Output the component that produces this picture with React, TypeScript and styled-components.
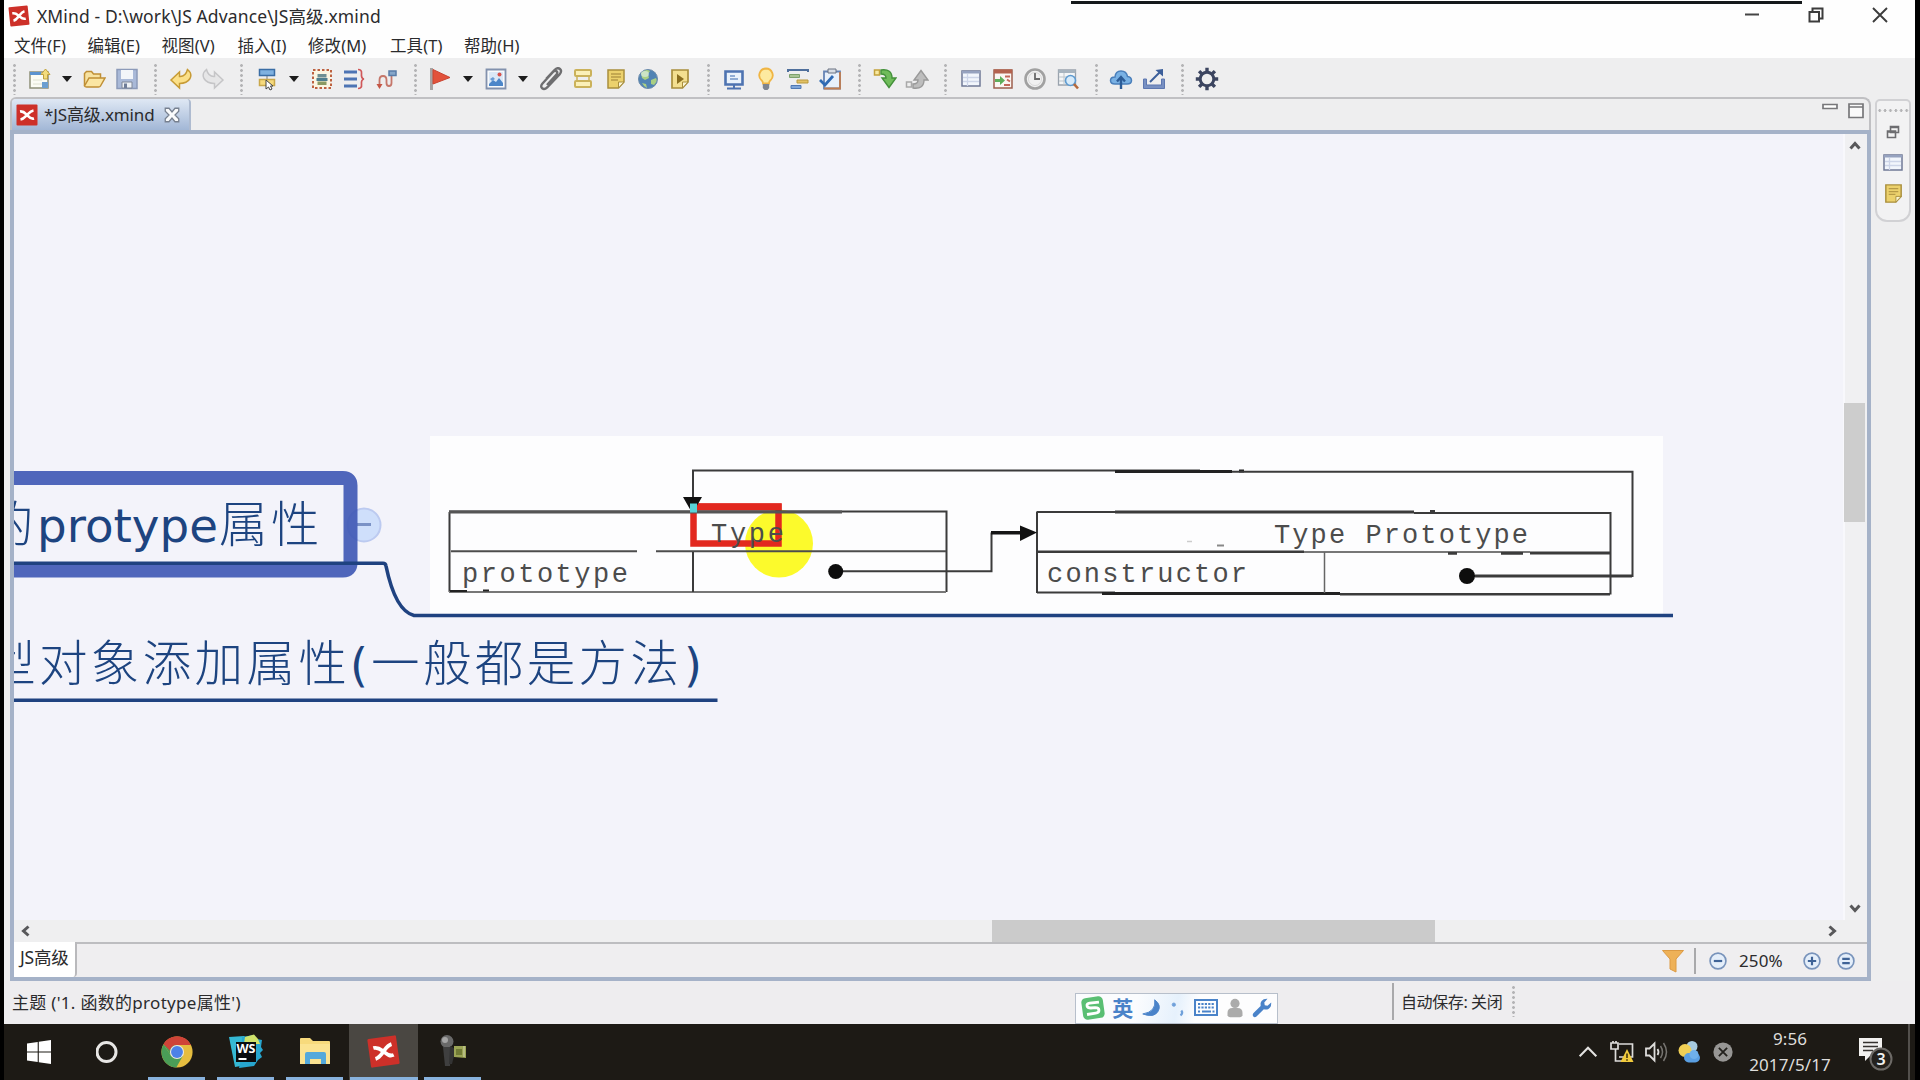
import React from "react";
import styled, { createGlobalStyle, css } from "styled-components";

const uiFont = `"Noto Sans", "Noto Sans CJK SC", sans-serif`;

const GlobalStyle = createGlobalStyle`
  * { box-sizing: border-box; }
  html, body { margin: 0; padding: 0; background: #000; overflow: hidden; }
`;

/* ---------- window ---------- */

const Screen = styled.div`
  position: relative;
  width: 1920px;
  height: 1080px;
  padding: 0 5px 0 4px;
  background: #000;
  display: flex;
  flex-direction: column;
  font-family: ${uiFont};
  font-size: 16px;
  color: #2b2b2d;
  white-space: nowrap;
  overflow: hidden;
`;

const TitleBar = styled.header`
  height: 32px;
  padding: 0 27px 0 4px;
  background: #fefefe;
  display: flex;
  align-items: center;
`;

const TitleText = styled.div`
  margin-left: 7px;
  font-size: 17.5px;
  letter-spacing: 0.12px;
  line-height: 30px;
`;

const WindowControls = styled.div`
  margin-left: auto;
  display: flex;
  gap: 48px;
  margin-top: -3px;
`;

const TopEdgeLine = styled.div`
  position: absolute;
  left: 1071px;
  top: 1px;
  width: 731px;
  height: 3px;
  background: #15191b;
`;

const MenuBar = styled.nav`
  height: 26px;
  padding: 0 10px;
  background: #fefefe;
  display: flex;
`;

const MenuItem = styled.div<{ $width: number }>`
  width: ${(p) => p.$width}px;
  font-size: 16.5px;
  letter-spacing: 0.1px;
  line-height: 27px;
`;

const Toolbar = styled.div`
  height: 39px;
  padding: 2px 0 0 0;
  background: #eeeeef;
  display: flex;
  align-items: center;
`;

const Slot = styled.div<{ $width?: number }>`
  width: ${(p) => p.$width ?? 32.3}px;
  height: 28px;
  display: flex;
  align-items: center;
  justify-content: center;
`;

const ArrowSlot = styled.div`
  width: 23px;
  display: flex;
  justify-content: center;
  &::before {
    content: "";
    border: 5px solid transparent;
    border-top: 6px solid #1c1c1c;
    border-bottom: 0;
  }
`;

const Grip = styled.div<{ $first?: boolean }>`
  width: ${(p) => (p.$first ? 19 : 21.5)}px;
  height: 32px;
  padding-left: ${(p) => (p.$first ? 9 : 11)}px;
  &::before {
    content: "";
    display: block;
    width: 3px;
    height: 100%;
    background: radial-gradient(circle, #b4b4b6 1.2px, transparent 1.6px) 0 0 / 3px 5px;
  }
`;

/* ---------- workspace ---------- */

const Workspace = styled.div`
  height: 884px;
  padding: 0 4px 0 6px;
  background: #eeeeef;
  display: flex;
  gap: 4px;
`;

const Editor = styled.section`
  width: 1861px;
  height: 884px;
  display: flex;
  flex-direction: column;
`;

const TabStrip = styled.div`
  height: 33px;
  border: 2px solid #c0c0c3;
  border-bottom: 0;
  border-radius: 6px 8px 0 0;
  display: flex;
  justify-content: space-between;
`;

const EditorTab = styled.div`
  width: 179px;
  height: 31px;
  padding-left: 3px;
  border-right: 2px solid #aebbd0;
  border-radius: 4px 4px 0 0;
  background: linear-gradient(#dfe8f4, #a2b7d6);
  display: flex;
  align-items: center;
`;

const TabText = styled.div`
  width: 119px;
  margin-left: 5px;
  font-size: 17px;
  line-height: 30px;
  letter-spacing: -0.15px;
`;

const TabActions = styled.div`
  padding: 4px 5px 0 0;
  display: flex;
  gap: 10px;
`;

const EditorFrame = styled.div`
  height: 851px;
  border: 4px solid #a5b2c8;
  display: flex;
  flex-direction: column;
`;

const CanvasRow = styled.div`
  height: 786px;
  display: flex;
`;

const Canvas = styled.div`
  width: 1829px;
  height: 786px;
  background: #f3f3fa;
  overflow: hidden;
`;

const VerticalScroll = styled.div`
  width: 24px;
  height: 786px;
  padding: 5px 3px 5px 0;
  border-left: 2px solid #f8f8fc;
  background: #f0f0f2;
  display: flex;
  flex-direction: column;
  align-items: center;
`;

const VerticalThumb = styled.div`
  width: 21px;
  height: 119px;
  margin: 250px 0 auto;
  background: #cdcdcd;
`;

const HorizontalScroll = styled.div`
  height: 22px;
  padding: 0 28px 0 5px;
  background: #efeff0;
  display: flex;
  align-items: center;
`;

const HorizontalThumb = styled.div`
  width: 443px;
  height: 22px;
  margin: 0 auto 0 959px;
  background: #cbcbcb;
`;

const SheetBar = styled.div`
  height: 35px;
  background: #efeef0;
  display: flex;
`;

const SheetTab = styled.div`
  width: 63px;
  height: 35px;
  padding-left: 6px;
  background: #fff;
  border-right: 2px solid #b9b9bc;
  border-bottom-right-radius: 4px;
  font-size: 17.5px;
  letter-spacing: -0.2px;
  line-height: 31px;
`;

const SheetTools = styled.div`
  flex: 1;
  border-top: 2px solid #bdbdc0;
  padding-right: 4px;
  display: flex;
  justify-content: flex-end;
  align-items: center;
`;

const Rule = styled.div<{ $height: number }>`
  width: 2px;
  height: ${(p) => p.$height}px;
  background: #a9a9ab;
`;

const Zoom = styled.div`
  width: 60px;
  padding-left: 4px;
  font-size: 17px;
  letter-spacing: 0.1px;
`;

const SidePanel = styled.aside`
  width: 37px;
  height: 123px;
  margin-top: 2px;
  padding-top: 8px;
  border: 2px solid #d1d1d4;
  border-radius: 5px 5px 12px 12px;
  background: #f2f2f3;
  display: flex;
  flex-direction: column;
  align-items: center;
`;

const SideGrip = styled.div`
  width: 32px;
  height: 3px;
  margin-bottom: 5px;
  background: radial-gradient(circle, #b4b4b6 1.2px, transparent 1.6px) 0 0 / 5.4px 3px;
`;

const SideSlot = styled.div`
  height: 30.5px;
  display: flex;
  align-items: center;
`;

/* ---------- status bar ---------- */

const StatusBar = styled.footer`
  height: 43px;
  padding: 0 0 3px 8px;
  background: #eeedef;
  display: flex;
  align-items: center;
`;

const StatusText = styled.div<{ $width: number }>`
  width: ${(p) => p.$width}px;
  font-size: 17px;
  letter-spacing: 0.3px;
`;

const AutoSave = styled.div`
  width: 109px;
  padding-left: 7px;
  font-size: 16px;
  letter-spacing: -0.4px;
`;

const InputBar = styled.div`
  position: absolute;
  left: 1075px;
  top: 993px;
  width: 203px;
  height: 31px;
  padding: 0 4px 2px;
  border: 1px solid #b7bfcb;
  background: linear-gradient(100deg, #fbfcfe 30%, #e6f1fc 50%, #fdfdfe 60%);
  display: flex;
  align-items: center;
  justify-content: space-between;
`;

const InputMode = styled.div`
  color: #4a83c9;
  font-size: 21px;
  font-weight: 700;
  line-height: 28px;
`;

/* ---------- taskbar ---------- */

const Taskbar = styled.div`
  height: 56px;
  background: #1d1a15;
  color: #dedddb;
  display: flex;
`;

const TaskSlot = styled.div<{ $state?: "open" | "active" }>`
  width: 69px;
  height: 56px;
  padding: 0 0 1px;
  display: flex;
  align-items: center;
  justify-content: center;
  ${(p) =>
    p.$state &&
    css`
      background: linear-gradient(#88b2dd, #88b2dd) 50% 100% / ${p.$state === "active" ? 68 : 57}px 3px no-repeat,
        ${p.$state === "active" ? "#4a4742" : "transparent"};
    `}
`;

const Tray = styled.div`
  margin-left: auto;
  display: flex;
  align-items: center;
`;

const TraySlot = styled.div<{ $width: number }>`
  width: ${(p) => p.$width}px;
  display: flex;
  justify-content: center;
`;

const Clock = styled.div`
  width: 102px;
  text-align: center;
  font-size: 17px;
  line-height: 26px;
  letter-spacing: 0.1px;
`;

const ShowDesktop = styled.div`
  width: 7px;
  height: 56px;
  border-left: 2px solid #53504c;
`;

/* ---------- icons ---------- */

const Icon = ({ s = 24, children }: { s?: number; children: React.ReactNode }) => (
  <svg width={s} height={s} viewBox="0 0 24 24" fill="none">
    {children}
  </svg>
);

const XLogo = ({ s, tilt = 0 }: { s: number; tilt?: number }) => (
  <Icon s={s}>
    <g transform={`rotate(${tilt} 12 12)`}>
      <rect x="1.5" y="1.5" width="21" height="21" rx="1" fill="#cd3029" />
      <path d="M5 8.500c3.500-.5 5 1.500 7 3.500s3.500 4.500 7 3.500M18.500 7.500c-3 .5-4.500 2.500-6.500 4.500s-3.500 4-6.500 4.500" stroke="#fff" strokeWidth="2.700" />
    </g>
  </Icon>
);

const toolIcons: Record<string, React.ReactNode> = {
  create: (
    <>
      <rect x="3" y="5" width="18" height="16" fill="#fbfcf4" stroke="#8e9078" strokeWidth="1.500" />
      <path d="M3 5h11v3H3z" fill="#5b93cf" />
      <path d="M15 15h6v6h-6z" fill="#6c9fd0" />
      <path d="M15 13H6M15 17H6" stroke="#dfe2d0" />
      <path d="m18.500 2 4.500 5.500h-2.500V12h-4V7.500H14z" fill="#f3dc7d" stroke="#c0a13c" />
    </>
  ),
  open: (
    <>
      <path d="M2.500 19V6.500l2-2h5l2 2.500h7v4" fill="#f7e2a0" stroke="#c08f35" strokeWidth="1.500" />
      <path d="M2.500 19 7 11h16l-4.500 8q-.5 1-2 1h-12q-1.500 0-2-1z" fill="#fbe6a3" stroke="#c08f35" strokeWidth="1.500" />
    </>
  ),
  save: (
    <>
      <path d="M2 2.500h20v19H2z" fill="#a9b9d8" stroke="#8c9ab9" strokeWidth="1.500" />
      <path d="M6 3h12v9H6z" fill="#f2f5f9" />
      <path d="M7 15h10v6H7z" fill="#eef1f5" stroke="#7e8798" />
      <path d="M9 16.500h3V21H9z" fill="#6f7d98" />
    </>
  ),
  undo: <path d="m2 13 8.500-8v4.500q6 .5 8-7 5 4 2.500 9-3 5-10.500 5V21z" fill="#fbe089" stroke="#c79b35" strokeWidth="1.500" />,
  redo: <path d="m22 13-8.500-8v4.500q-6 .5-8-7-5 4-2.500 9 3 5 10.500 5V21z" fill="#e6e6e7" stroke="#c5c5c7" strokeWidth="1.500" />,
  topic: (
    <>
      <path d="M4.500 2.500h15v6h-15z" fill="#7fb1e0" stroke="#3a6da5" strokeWidth="1.500" />
      <path d="M12 9v3" stroke="#777" />
      <path d="M4.500 12.500h15v6h-15z" fill="#f6da7d" stroke="#c9a84b" strokeWidth="1.500" />
      <path d="M11 13v9l2.500-2 1.500 3 2-1-1.500-3H18z" fill="#fff" stroke="#444" />
    </>
  ),
  boundary: (
    <>
      <rect x="3" y="3" width="18" height="18" fill="#fbf6e2" stroke="#bd6140" strokeWidth="2" strokeDasharray="2.500 2" />
      <path d="M7.500 7h9v3.500h-9z" fill="#6d8f92" />
      <path d="M6.500 11h11v3h-11z" fill="#4f7f8f" />
      <path d="M7.500 14.500h9V18h-9z" fill="#8a9a62" />
    </>
  ),
  summary: (
    <>
      <path d="M2 5h13M2 12h13M2 19h13" stroke="#4d74b4" strokeWidth="2.800" />
      <path d="M16 2.500q4 0 3.500 4-.5 5 2.500 5.500-3 .5-2.500 5.500.5 4-3.500 4" stroke="#d0585a" strokeWidth="1.700" />
    </>
  ),
  relation: (
    <>
      <path d="M4.500 20v-7q0-4 3.500-4t3.500 4v3q0 3 2.500 3t2.500-3V9" stroke="#c5766a" strokeWidth="1.800" />
      <path d="m1.500 17 3 5 3-5z" fill="#c55645" />
      <path d="M14 4h7v4.500h-7z" fill="#86a6c9" stroke="#597ca8" strokeWidth="1.500" />
    </>
  ),
  flag: (
    <>
      <path d="M3.500 1v22" stroke="#a7a3a3" strokeWidth="3" />
      <path d="M5 2.500 22 10.500 5 17z" fill="#e2523b" stroke="#c94431" />
    </>
  ),
  image: (
    <>
      <path d="M2.500 2.500h19v19h-19z" fill="#f8fafc" stroke="#8291ad" strokeWidth="1.800" />
      <path d="M5 5h14v14H5z" fill="#dbe8f6" />
      <path d="m5 17 4-4 3 2 3-4 4 5v3H5z" fill="#4c86c9" />
      <circle cx="15.500" cy="7.500" r="2" fill="#d9534d" />
      <path d="m6 12 3-2 2 2-3 2z" fill="#6a9bd4" />
    </>
  ),
  clip: (
    <path
      d="m8 18 9.500-10.500q1.500-2 0-3.200T14 5L3.500 16.500q-2.500 3-.3 4.800 2.300 1.700 5-1L20.500 7.500q2.800-3.500.5-5.500-2.500-2-5.500 1L7 12"
      stroke="#6e6e70"
      strokeWidth="2.400"
    />
  ),
  label: (
    <>
      <path d="M4 4q0-1 1-1h14q1 0 1 1v4q0 1-1 1H5q-1 0-1-1zM4 15q0-1 1-1h14q1 0 1 1v4q0 1-1 1H5q-1 0-1-1z" fill="#fbf0b7" stroke="#cbb25a" strokeWidth="2" />
      <path d="M6 9v5M18 9v5" stroke="#cbb25a" strokeWidth="1.500" />
    </>
  ),
  note: (
    <>
      <path d="M4 3h16v12l-5.500 6H4z" fill="#ecd16c" stroke="#a98f3d" strokeWidth="1.500" />
      <path d="M20 15h-5.500v6z" fill="#fbf5d4" stroke="#a98f3d" />
      <path d="M7 7h10M7 10h10M7 13h7" stroke="#b79b47" strokeWidth="1.300" />
    </>
  ),
  globe: (
    <>
      <circle cx="12" cy="12" r="9.500" fill="#5083b4" stroke="#6b8bab" />
      <path d="M5 6q5-5 9-2l-2 3 1 4-4 2-3-2zM15 13l5-2q2 3-2 7l-3-1zM6 16l4 1 1 4q-3-1-5-5z" fill="#a9cf83" />
      <ellipse cx="9" cy="7" rx="4" ry="3" fill="#e5f2f2" opacity=".6" />
    </>
  ),
  audio: (
    <>
      <path d="M4 3h16v12l-5.500 6H4z" fill="#f3df90" stroke="#a98f3d" strokeWidth="1.700" />
      <path d="M20 15h-5.500v6z" fill="#fbf5d4" stroke="#a98f3d" />
      <path d="m9 7 7 5-7 5z" fill="#8a6e1f" />
    </>
  ),
  present: (
    <>
      <path d="M3.500 4.500h17v13h-17z" fill="#eaf2fb" stroke="#4e73b1" strokeWidth="2.600" />
      <path d="M5 21.500h14M12 18v3" stroke="#4e73b1" strokeWidth="2" />
      <path d="M8 9h5M8 12h8" stroke="#90acd4" strokeWidth="1.800" />
    </>
  ),
  bulb: (
    <>
      <path d="M12 1.500a6.800 6.800 0 0 0-4.500 11.800q1.500 1.200 1.500 3.200h6q0-2 1.500-3.200A6.800 6.800 0 0 0 12 1.500z" fill="#fdeaa0" stroke="#f0b544" strokeWidth="1.800" />
      <path d="M8.800 17h6.400v4l-1.700 2h-3l-1.700-2z" fill="#7e8590" />
    </>
  ),
  gantt: (
    <>
      <path d="M1 3h22M2 3v2M22 3v2" stroke="#4f6f9c" strokeWidth="2" />
      <path d="M3.500 7.500h10v3h-10z" fill="#a9c494" stroke="#7da06c" />
      <path d="M11 13h11v3H11z" fill="#e2c165" stroke="#b8983e" />
      <path d="M5 18.500h10v3H5z" fill="#7fa5d8" stroke="#5078b4" />
    </>
  ),
  task: (
    <>
      <path d="M5 4.500h16v17H5z" fill="#e8f0fb" stroke="#6684b5" strokeWidth="1.800" />
      <path d="M5 21.500h16V5" stroke="#c07d50" strokeWidth="1.800" />
      <path d="M9 2h8v4H9z" fill="#d8dde5" stroke="#6a7382" />
      <path d="m1 13 5 5 8-9" stroke="#2f6ab4" strokeWidth="2.800" />
    </>
  ),
  drillDown: (
    <>
      <path d="M1.500 3h5v5h-5z" fill="#f8e9a1" stroke="#c3a23d" strokeWidth="1.500" />
      <path d="M8 3q11-1.500 11 8h4l-7 9.500L9 11h4q0-4-5-4z" fill="#6fbc5a" stroke="#43903a" strokeWidth="1.400" />
    </>
  ),
  drillUp: (
    <>
      <path d="M1.500 15h5v5h-5z" fill="#eee" stroke="#a9a9a9" strokeWidth="1.500" />
      <path d="M8 21q11 1.500 11-8h4l-7-9.500L9 13h4q0 4-5 4z" fill="#bdbdbd" stroke="#999" strokeWidth="1.400" />
    </>
  ),
  table: (
    <>
      <path d="M3 4h18v15H3z" fill="#f2f6fc" stroke="#707a96" strokeWidth="1.500" />
      <path d="M3 4h18v2.500H3z" fill="#96a2bf" />
      <path d="M8.500 7v12M4 10.500h16M4 14.500h16" stroke="#cdd5e8" strokeWidth="1.300" />
    </>
  ),
  marker: (
    <>
      <path d="M3 3h18v18H3z" fill="#fbf6f2" stroke="#9d5f4e" strokeWidth="1.500" />
      <path d="M3 2.500h18v4H3z" fill="#b4624e" />
      <path d="M4 12h5V9l5 4.500-5 4.500v-3H4z" fill="#5fae5a" />
      <path d="M14 9.500h5M16 12.500l3 2M13 18h6" stroke="#c3675a" strokeWidth="1.900" />
    </>
  ),
  clock: (
    <>
      <circle cx="12" cy="12" r="9.500" fill="#f1f1f1" stroke="#a1a1a1" strokeWidth="2.600" />
      <path d="M12 6v6h5" stroke="#6b6b6b" strokeWidth="1.800" />
      <circle cx="12" cy="12" r="6.500" stroke="#d0d0d0" strokeWidth=".8" />
    </>
  ),
  find: (
    <>
      <path d="M2.500 3h17v15h-17z" fill="#f4f6f7" stroke="#9aa3ad" strokeWidth="1.300" />
      <path d="M2.500 3h17v3h-17z" fill="#a7b4bf" />
      <path d="M8 6v12M3 10h16M3 14h16" stroke="#bcc5cb" />
      <circle cx="14.500" cy="13.500" r="5" fill="#d7ebfa" stroke="#5e9bd0" strokeWidth="1.600" />
      <path d="m18 17 4 4.500" stroke="#b5693b" strokeWidth="2.600" />
    </>
  ),
  upload: (
    <>
      <path d="M6 17q-4.500 0-4.500-3.500T6 10q.5-6 6-6t6.500 5.500q4 .5 4 4T18 17z" fill="#79b1e4" stroke="#4a7fbb" strokeWidth="1.500" />
      <path d="M12 22V11M8 14.500l4-4.500 4 4.500" stroke="#2c5c97" strokeWidth="2.400" />
    </>
  ),
  share: (
    <>
      <path d="M1.500 12v9.500h21V12h-3v6h-15v-6z" fill="#7890c2" stroke="#5d77b0" />
      <path d="m8 15 10-10" stroke="#3c5f9a" strokeWidth="2" />
      <path d="M21 2v7.500L13.500 3z" fill="#3c5f9a" />
    </>
  ),
  gear: (
    <>
      <circle cx="12" cy="12" r="6.800" stroke="#3c4560" strokeWidth="3" />
      <path
        d="M12 .8V5M12 19v4.200M.8 12H5M19 12h4.200M4.100 4.100 7 7M17 17l2.900 2.900M4.100 19.900 7 17M17 7l2.900-2.900"
        stroke="#3c4560"
        strokeWidth="3.400"
      />
    </>
  ),
};

const Chevron = ({ turn }: { turn: number }) => (
  <svg width="14" height="14" viewBox="0 0 14 14" fill="none">
    <path d="M2.500 9.500 7 4.500l4.500 5" stroke="#58585a" strokeWidth="3" transform={`rotate(${turn} 7 7)`} />
  </svg>
);

const ZoomButton = ({ sign }: { sign: string }) => (
  <Icon s={20}>
    <circle cx="12" cy="12" r="9.500" fill="#e4eefa" stroke="#7893bb" strokeWidth="2" />
    <path d={sign} stroke="#3f6397" strokeWidth="2.600" />
  </Icon>
);

/* ---------- mind map ---------- */

const TopicText = styled.text`
  font-family: "DejaVu Sans", "Noto Sans CJK SC", sans-serif;
  font-size: 46px;
  fill: #1d4480;
`;

const Hanzi = styled.tspan`
  font-family: "Noto Sans CJK SC Light", "Noto Sans CJK SC", sans-serif;
  font-weight: 300;
  font-size: 48.5px;
  letter-spacing: 3.400px;
`;

const ScanText = styled.text`
  font-family: "Liberation Mono", monospace;
  font-size: 27px;
  fill: #4c4c4c;
`;

const MindMap = () => (
  <svg width="1829" height="786" viewBox="14 134 1829 786" fill="none">
    <rect x="430" y="436" width="1233" height="178" fill="#fdfdfe" />

    <circle cx="364" cy="525" r="16.500" fill="#cfdffb" stroke="#bccaf0" strokeWidth="2" />
    <path d="M357 524.500h14" stroke="#7b92c6" strokeWidth="3" />
    <path d="M-20 478H343Q350.500 478 350.500 485.500V563Q350.500 570.500 343 570.500H-20" stroke="#3d57b4" strokeOpacity=".9" strokeWidth="14" />
    <path d="M0 563.300H383Q385.500 563.300 386 566C391 590 400 612 414 615.500H1673" stroke="#1f4280" strokeWidth="3.600" />
    <path d="M0 700.300H717.500" stroke="#1f4280" strokeWidth="3.600" />
    <TopicText y="542">
      <Hanzi x="-15">的</Hanzi>
      <tspan x="37" textLength="181" lengthAdjust="spacingAndGlyphs">protype</tspan>
      <Hanzi x="219">属性</Hanzi>
    </TopicText>
    <TopicText y="680.500">
      <Hanzi x="-13">型对象添加属性</Hanzi>
      <tspan x="350">(</tspan>
      <Hanzi x="371">一般都是方法</Hanzi>
      <tspan x="684">)</tspan>
    </TopicText>

    <ellipse cx="779" cy="543.500" rx="34" ry="34" fill="#fcfa2c" />
    <path d="M693.500 506.500H778.500V543.500H693.500z" stroke="#e2281f" strokeWidth="6.500" />
    <path d="M690 503.500h91.500v7H690z" fill="#e2281f" />

    <g stroke="#3b3b3b" strokeWidth="2">
      <path d="M449.500 512V592M449 511.500H946.500V592" />
      <path d="M449 512H842" stroke="#555" strokeWidth="3" />
      <path d="M451 551.300H637M656 551.300H946" stroke="#4d4d4d" />
      <path d="M449 592H946" stroke="#777" />
      <path d="M450 591h17M483 590.500h6" stroke="#222" />
      <path d="M693 552V592" />
      <path d="M693 499V470.500H1200" />
      <path d="M1115 471.500H1232M1239 471h5" stroke="#222" strokeWidth="3" />
      <path d="M1232 471.700H1632.500V576H1467" />
      <path d="M1475 576H1632" strokeWidth="3" />
      <path d="M836 571.300H991.500V532.500" />
      <path d="M991 532.700H1024" stroke="#151515" strokeWidth="3.500" />
      <path d="M1037 511.500V593M1037 512H1115" />
      <path d="M1115 512H1414M1430 511.500h5" strokeWidth="3" />
      <path d="M1414 513H1610.500V594.500" />
      <path d="M1037 551.700H1304" strokeWidth="2.500" />
      <path d="M1304 552H1530" stroke="#777" />
      <path d="M1448 553.300h9M1501 553.300h22M1530 553H1610" strokeWidth="2.800" />
      <path d="M1037 592.500H1115" />
      <path d="M1102 593.500H1340" stroke="#222" strokeWidth="3" />
      <path d="M1340 594.300H1610" strokeWidth="2.500" />
      <path d="M1324.500 552V593" stroke="#666" strokeWidth="1.500" />
      <path d="M1217 545.500h7" stroke="#888" />
      <path d="M1187 541.500h5" stroke="#ccc" strokeWidth="1.500" />
    </g>
    <path d="M683 497h19l-8 14h-3zM1020 525.500v15.500l17-8.500z" fill="#111" />
    <path d="M690 503.500h7v9h-7z" fill="#5ad3d8" />
    <circle cx="835.700" cy="571.500" r="7.500" fill="#0d0d0d" />
    <circle cx="1467" cy="576" r="8" fill="#0d0d0d" />

    <ScanText x="462" y="581.500" textLength="166">prototype</ScanText>
    <ScanText x="711" y="542" textLength="73">Type</ScanText>
    <ScanText x="1274" y="542.500" textLength="254">Type Prototype</ScanText>
    <ScanText x="1047" y="581.500" textLength="200">constructor</ScanText>
  </svg>
);

/* ---------- data ---------- */

const tools =
  "create > open save | undo redo | topic > boundary summary relation | flag > image > clip label note globe audio | present bulb gantt task | drillDown drillUp | table marker clock find | upload share | gear".split(
    " "
  );

const menus: [string, number][] = [
  ["文件(F)", 73.5],
  ["编辑(E)", 74],
  ["视图(V)", 76],
  ["插入(I)", 70.5],
  ["修改(M)", 82],
  ["工具(T)", 74],
  ["帮助(H)", 80],
];

export default function App() {
  return (
    <Screen>
      <GlobalStyle />
      <TitleBar>
        <XLogo s={22} tilt={-6} />
        <TitleText>XMind - D:\work\JS Advance\JS高级.xmind</TitleText>
        <WindowControls>
          <svg width="16" height="16" fill="none"><path d="M1 7.500h14" stroke="#444" strokeWidth="2" /></svg>
          <svg width="16" height="16" fill="none" stroke="#3c3c3c" strokeWidth="2">
            <path d="M1.500 5h9.500v9.500H1.500zM4.500 4V1.500h10V11.500H12" />
          </svg>
          <svg width="16" height="16" fill="none" stroke="#3c3c3c" strokeWidth="1.900">
            <path d="m1 1 14 14M15 1 1 15" />
          </svg>
        </WindowControls>
      </TitleBar>
      <TopEdgeLine />
      <MenuBar>
        {menus.map(([name, width]) => (
          <MenuItem key={name} $width={width}>{name}</MenuItem>
        ))}
      </MenuBar>
      <Toolbar>
        <Grip $first />
        {tools.map((t, i) =>
          t === "|" ? <Grip key={i} /> : t === ">" ? <ArrowSlot key={i} /> : (
            <Slot key={i}><Icon>{toolIcons[t]}</Icon></Slot>
          )
        )}
      </Toolbar>

      <Workspace>
        <Editor>
          <TabStrip>
            <EditorTab>
              <XLogo s={24} />
              <TabText>*JS高级.xmind</TabText>
              <Icon s={18}>
                <path d="M3 3h5l4 5 4-5h5v4l-5 5 5 5v4h-5l-4-5-4 5H3v-4l5-5-5-5z" fill="#fafbfc" stroke="#77808f" strokeWidth="1.700" />
              </Icon>
            </EditorTab>
            <TabActions>
              <svg width="16" height="16" fill="none"><path d="M1 1.500h14v4H1z" fill="#fff" stroke="#77777a" strokeWidth="1.700" /></svg>
              <svg width="16" height="16" fill="none" stroke="#77777a" strokeWidth="1.700"><path d="M1 1h14v13.500H1zM1 4h14" fill="#fafafa" /></svg>
            </TabActions>
          </TabStrip>
          <EditorFrame>
            <CanvasRow>
              <Canvas><MindMap /></Canvas>
              <VerticalScroll>
                <Chevron turn={0} />
                <VerticalThumb />
                <Chevron turn={180} />
              </VerticalScroll>
            </CanvasRow>
            <HorizontalScroll>
              <Chevron turn={-90} />
              <HorizontalThumb />
              <Chevron turn={90} />
            </HorizontalScroll>
            <SheetBar>
              <SheetTab>JS高级</SheetTab>
              <SheetTools>
                <Slot>
                  <Icon><path d="M1.500 1.500h21L15 10v13l-6-3V10z" fill="#eeb158" stroke="#dc9a43" /></Icon>
                </Slot>
                <Slot $width={12}><Rule $height={26} /></Slot>
                <Slot $width={34}><ZoomButton sign="M7 12h10" /></Slot>
                <Zoom>250%</Zoom>
                <Slot $width={34}><ZoomButton sign="M7 12h10M12 7v10" /></Slot>
                <Slot $width={34}><ZoomButton sign="M7.500 9.500h9M7.500 14.500h9" /></Slot>
              </SheetTools>
            </SheetBar>
          </EditorFrame>
        </Editor>
        <SidePanel>
          <SideGrip />
          <SideSlot>
            <svg width="14" height="14" fill="#f4f4f4" stroke="#6d6d70" strokeWidth="1.600">
              <path d="M4.500 1.500h8v6h-8zM1.500 6h8v6.500h-8zM4.500 2.500h8M1.500 7h8" />
            </svg>
          </SideSlot>
          <SideSlot><Icon>{toolIcons.table}</Icon></SideSlot>
          <SideSlot><Icon s={23}>{toolIcons.note}</Icon></SideSlot>
        </SidePanel>
      </Workspace>

      <StatusBar>
        <StatusText $width={1380}>主题 ('1. 函数的protype属性')</StatusText>
        <Rule $height={37} />
        <AutoSave>自动保存: 关闭</AutoSave>
        <Grip $first />
      </StatusBar>

      <InputBar>
        <Icon s={26}>
          <rect x="2" y="2" width="20" height="20" rx="4" fill="#5abf73" transform="rotate(-8 12 12)" />
          <path d="M17.500 6.500 9 7.500q-3 .5-2.500 2.500t3.500 2l4-.3q3.500 0 3.500 2.300t-3 2.700L6.500 18" stroke="#fff" strokeWidth="2.600" />
        </Icon>
        <InputMode>英</InputMode>
        <Icon s={22}><path d="M16 3q8 6 3.500 13T3 18.500Q18 16 16 3z" fill="#4a83c9" stroke="#4a83c9" /></Icon>
        <Icon s={20}><circle cx="7" cy="8" r="2" fill="#6fa0da" stroke="#6fa0da" /><path d="M16 15q2.500 3-1 6" stroke="#6fa0da" strokeWidth="2.600" /></Icon>
        <svg width="24" height="17" fill="none">
          <rect x="1" y="1" width="22" height="15" stroke="#4a83c9" strokeWidth="2" />
          <path d="M4 5h16M4 8.500h16" stroke="#4a83c9" strokeWidth="2" strokeDasharray="2.200 1.200" />
          <path d="M4 12.500h2M8 12.500h9M18.500 12.500h2" stroke="#4a83c9" strokeWidth="2" />
        </svg>
        <Icon s={20}><circle cx="12" cy="6.500" r="5.500" fill="#ababab" /><path d="M3 21v-3q0-6 6-6h6q6 0 6 6v3q-1 2-3 2H6q-2 0-3-2z" fill="#ababab" /></Icon>
        <Icon s={22}>
          <path d="M22 6q.5 5-3 7-2 1-5 .3l-8 8q-2 1.500-3.500 0t0-3.500l8-8q-1-3 1-5.500T18 2l-3.500 4 .5 3 3 .5z" fill="#4a83c9" />
        </Icon>
      </InputBar>

      <Taskbar>
        <TaskSlot>
          <Icon><path d="M0 3.500 10.700 2v9.400H0zM11.800 1.800 24 0v11.400H11.800zM0 12.600h10.700V22L0 20.500zM11.800 12.600H24V24l-12.200-1.800z" fill="#fff" /></Icon>
        </TaskSlot>
        <TaskSlot>
          <Icon><circle cx="10.500" cy="12" r="9.500" stroke="#e8e7e5" strokeWidth="3" /></Icon>
        </TaskSlot>
        <TaskSlot $state="open">
          <Icon s={34}>
            <circle cx="12" cy="12" r="11" fill="#e5bd3f" />
            <path d="M12 12 2.500 6.500A11 11 0 0 1 21.800 7H12z" fill="#cf4438" />
            <path d="M2.500 6.500A11 11 0 0 0 11.500 23L16.300 14.500 12 12 7.700 14.500z" fill="#4a9d57" />
            <path d="M2.500 6.500 7.700 14.500 12 12 12 7z" fill="#4a9d57" />
            <path d="M2.500 6.500A11 11 0 0 1 21.800 7H12q-4 0-5 4z" fill="#cf4438" />
            <circle cx="12" cy="12" r="5" fill="#ece9de" />
            <circle cx="12" cy="12" r="4.200" fill="#4c82e8" />
          </Icon>
        </TaskSlot>
        <TaskSlot $state="open">
          <svg width="36" height="36" viewBox="0 0 36 36" fill="none">
            <path d="M1 3l15-1 4 3-1 26-12 2z" fill="#35b8d4" />
            <path d="m14 3 12-2 3 4 5 1-1 7 2 3-3 3 2 4-4 3-4 6-15 2 2-10z" fill="#27a6cf" />
            <path d="m17 3 9-2.500 4 4.500 2 5H16z" fill="#cfe26a" />
            <rect x="8" y="8" width="20" height="20" fill="#0a0d10" />
            <text x="8.500" y="19" fill="#fff" fontSize="12.500" fontWeight="700" textLength="19" lengthAdjust="spacingAndGlyphs" fontFamily="Open Sans, sans-serif">WS</text>
            <path d="M10.500 25h8" stroke="#fff" strokeWidth="2" />
          </svg>
        </TaskSlot>
        <TaskSlot $state="open">
          <svg width="34" height="30" viewBox="0 0 34 30">
            <path d="M2 2q0-1 1-1h9l3 3h16q1 0 1 1v22H2z" fill="#f7da7c" />
            <path d="M2 7h30v20H2z" fill="#fbe391" />
            <path d="M7 17q0-2 2-2h17q2 0 2 2v10h-5v-5H12v5H7z" fill="#54a9db" />
          </svg>
        </TaskSlot>
        <TaskSlot $state="active"><XLogo s={33} tilt={-8} /></TaskSlot>
        <TaskSlot $state="open">
          <svg width="32" height="36" viewBox="0 0 32 36">
            <circle cx="10" cy="7.500" r="6.500" fill="#696969" />
            <circle cx="8" cy="6" r="3" fill="#a5a5a5" />
            <path d="M6 13h8l-1 19H8z" fill="#3f3f3f" />
            <path d="M13 12q6 2 5 6l-3 12h-3z" fill="#333" />
            <path d="M17 12h12v12l-12-1z" fill="#9ba455" />
            <path d="M19 15h6v6h-6z" fill="#717b35" />
            <path d="M27 12v11" stroke="#d3d6b0" />
          </svg>
        </TaskSlot>

        <Tray>
          <TraySlot $width={34}>
            <Icon s={20}><path d="m2 17 10-10 10 10" stroke="#e4e3e1" strokeWidth="2.500" /></Icon>
          </TraySlot>
          <TraySlot $width={34}>
            <Icon>
              <path d="M9 4h13.500v13H9M5.500 9v12H12M1 3h7v6H1zM3 3V1M6 3V1" stroke="#dddcda" strokeWidth="1.700" />
              <path d="m17 9 6.500 13H10.500z" fill="#f2cb3d" />
              <path d="M17 13.500v4.500M17 19.200v1.600" stroke="#4e3e10" strokeWidth="1.700" />
            </Icon>
          </TraySlot>
          <TraySlot $width={33}>
            <Icon>
              <path d="M2 8.500h3.500L10.500 3.500v17L5.500 15.500H2z" stroke="#dddcda" strokeWidth="1.800" />
              <path d="M13.500 9q2 3 0 6" stroke="#dddcda" strokeWidth="1.800" />
              <path d="M16.500 6q4 6 0 12M19.500 3q6 9 0 18" stroke="#777571" strokeWidth="1.500" />
            </Icon>
          </TraySlot>
          <TraySlot $width={34}>
            <Icon>
              <circle cx="15" cy="6.500" r="5.500" fill="#a7cbe0" />
              <circle cx="8" cy="10.500" r="6.500" fill="#f0cf55" />
              <rect x="7" y="13" width="16" height="9.500" rx="4.700" fill="#5a9fe2" />
              <circle cx="17" cy="14.500" r="4.500" fill="#6fb0ea" />
            </Icon>
          </TraySlot>
          <TraySlot $width={33}>
            <Icon s={22}><circle cx="12" cy="12" r="10.500" fill="#979694" /><path d="m7.500 7.500 9 9M16.500 7.500l-9 9" stroke="#23211d" strokeWidth="2" /></Icon>
          </TraySlot>
          <Clock>
            <div>9:56</div>
            <div>2017/5/17</div>
          </Clock>
          <TraySlot $width={67}>
            <svg width="38" height="38" viewBox="0 0 38 38" fill="none">
              <path d="M3 5h23v18H14l-5 5v-5H3z" fill="#f2f1ef" />
              <path d="M7 9.500h15M7 13.500h15M7 17.500h10" stroke="#35322e" strokeWidth="1.600" />
              <circle cx="25" cy="26" r="10.500" fill="#24211d" stroke="#6d6a66" strokeWidth="2" />
              <text x="20.500" y="32" fill="#f2f1ef" fontSize="16" fontWeight="600" fontFamily="Noto Sans, sans-serif">3</text>
            </svg>
          </TraySlot>
          <ShowDesktop />
        </Tray>
      </Taskbar>
    </Screen>
  );
}
